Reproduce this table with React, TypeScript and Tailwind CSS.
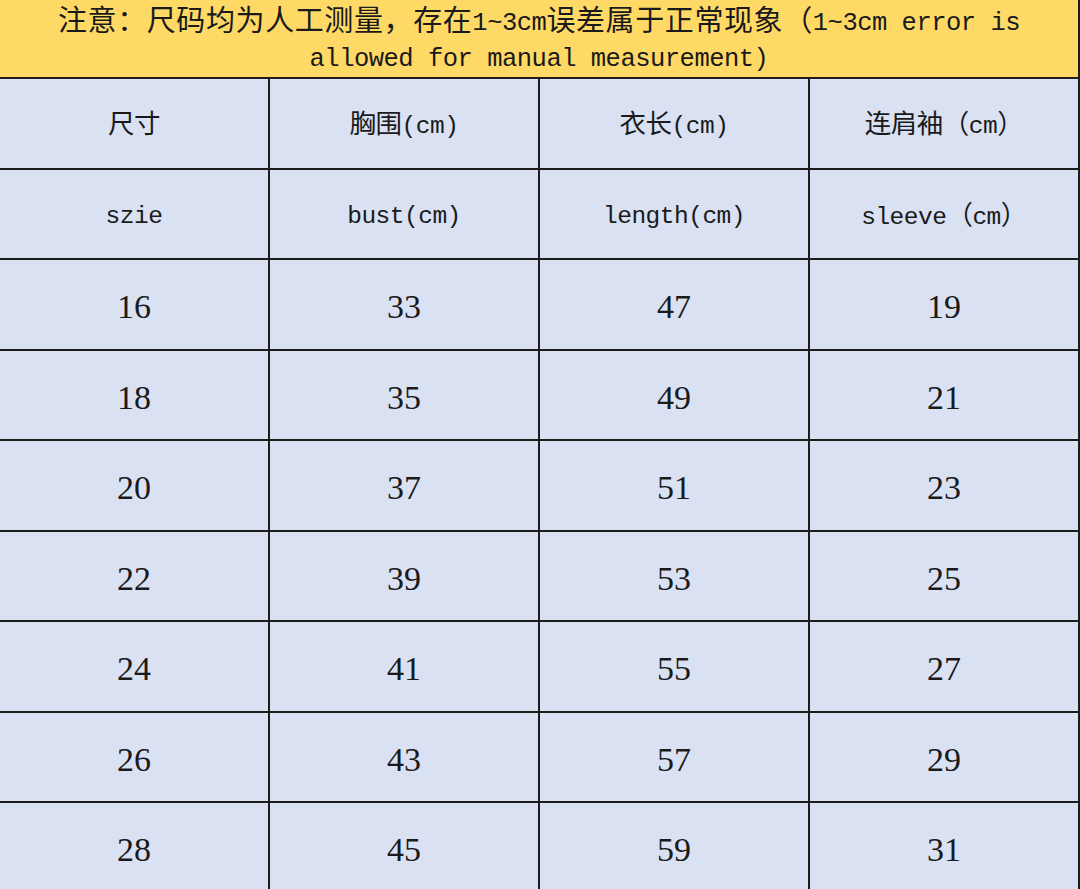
const mono = "font-['Liberation_Mono','Noto_Sans_CJK_SC',monospace]";

const heads: { zh: React.ReactNode; en: React.ReactNode }[] = [
  { zh: <span className="text-[26.5px]">尺寸</span>, en: "szie" },
  {
    zh: (
      <>
        <span className="text-[26.5px]">胸围</span>(cm)
      </>
    ),
    en: "bust(cm)",
  },
  {
    zh: (
      <>
        <span className="text-[26.5px]">衣长</span>(cm)
      </>
    ),
    en: "length(cm)",
  },
  {
    zh: (
      <>
        <span className="text-[26.5px]">连肩袖（</span>cm<span className="text-[26.5px]">）</span>
      </>
    ),
    en: (
      <>
        sleeve<span className="text-[26.5px]">（</span>cm<span className="text-[26.5px]">）</span>
      </>
    ),
  },
];

const rows = [
  [16, 33, 47, 19],
  [18, 35, 49, 21],
  [20, 37, 51, 23],
  [22, 39, 53, 25],
  [24, 41, 55, 27],
  [26, 43, 57, 29],
  [28, 45, 59, 31],
];

function Cell({ children, className = "" }: { children: React.ReactNode; className?: string }) {
  return (
    <div
      className={
        "h-[90.5px] flex items-center justify-center border-r-2 border-b-2 border-[#1c1c1c] text-[#1a1a1a] " +
        className
      }
    >
      {children}
    </div>
  );
}

export default function App() {
  return (
    <div className="w-[1080px] h-[889px] overflow-hidden bg-[#d9e1f2]">
      <div
        className={
          "h-[79px] bg-[#ffd966] border-r-2 border-b-2 border-[#1c1c1c] flex flex-col items-center justify-start text-[25.5px] tracking-[-0.5px] text-[#1a1a1a] pt-[6px] " +
          mono
        }
      >
        <div className="whitespace-nowrap h-[36px] flex items-center">
          <span className="text-[29px] tracking-[0.6px]">注意：尺码均为人工测量，存在</span>1~3cm
          <span className="text-[29px] tracking-[0.6px]">误差属于正常现象（</span>1~3cm error is
        </div>
        <div className="whitespace-nowrap h-[36px] flex items-center">allowed for manual measurement)</div>
      </div>
      <div className="grid grid-cols-4">
        {heads.map((h, i) => (
          <Cell key={"zh" + i} className={"text-[24.5px] tracking-[-0.5px] pt-[8px] " + mono}>
            <span>{h.zh}</span>
          </Cell>
        ))}
        {heads.map((h, i) => (
          <Cell key={"en" + i} className={"text-[24.5px] tracking-[-0.5px] pt-[8px] " + mono}>
            <span>{h.en}</span>
          </Cell>
        ))}
        {rows.map((r, ri) =>
          r.map((v, ci) => (
            <Cell
              key={ri + "-" + ci}
              className="text-[34px] pt-[5px] font-['Liberation_Serif',serif]"
            >
              {v}
            </Cell>
          ))
        )}
      </div>
    </div>
  );
}
